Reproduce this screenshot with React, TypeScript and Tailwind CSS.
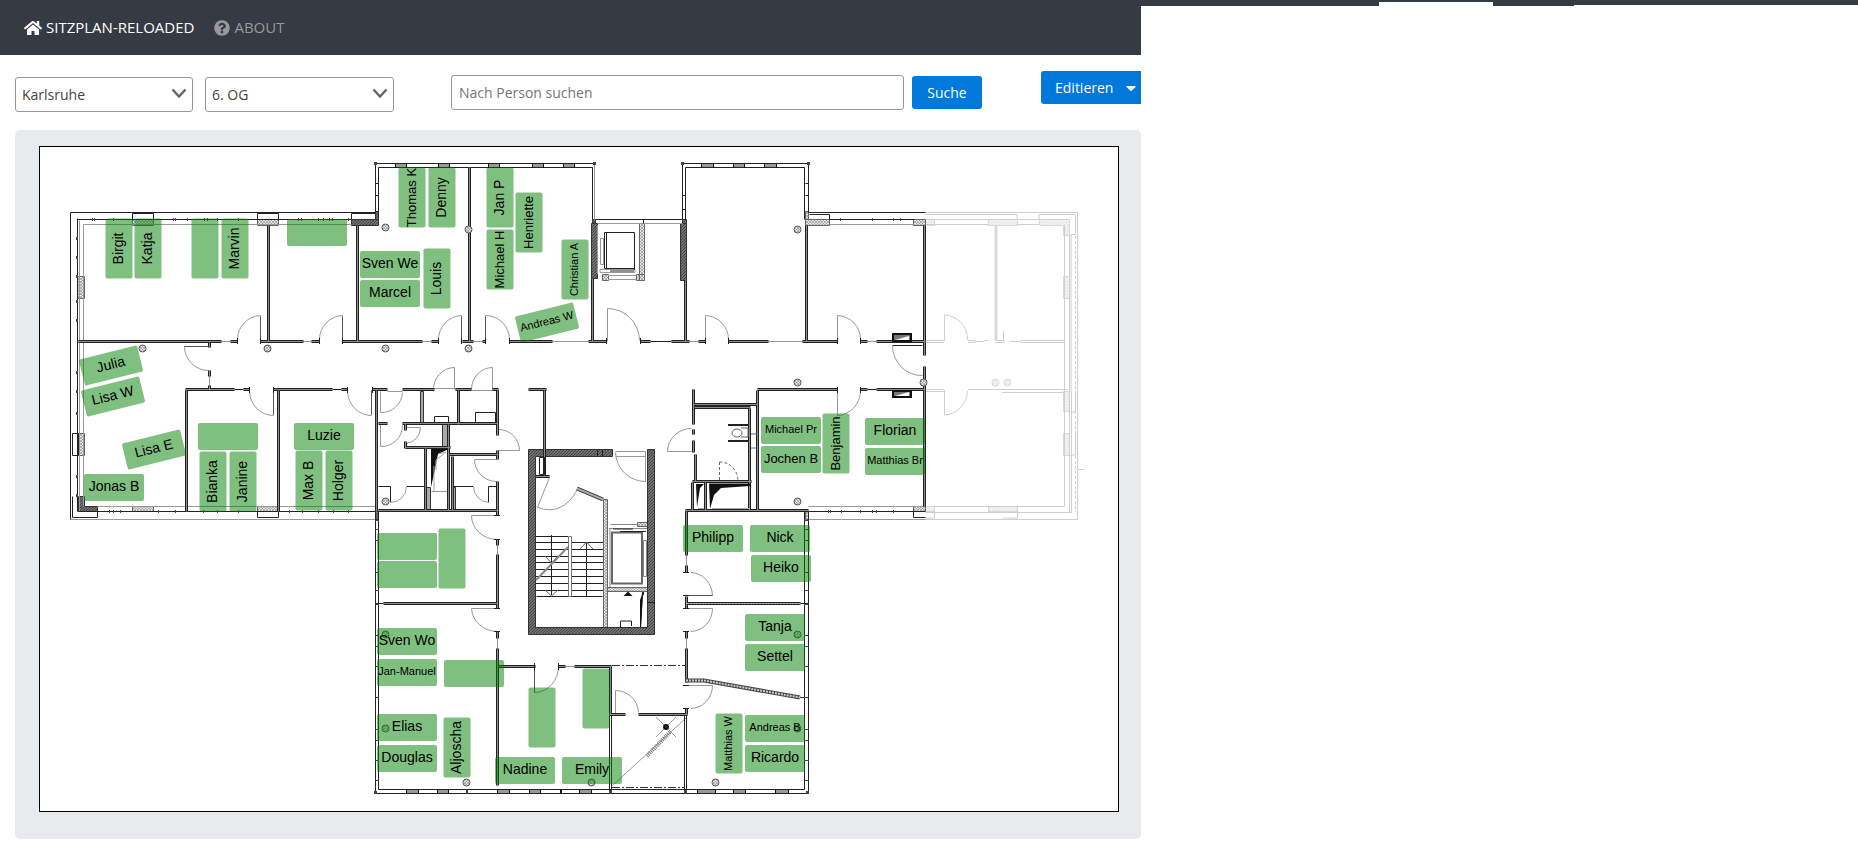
import React from "react";
import { FaHome, FaQuestionCircle, FaCaretDown } from "react-icons/fa";

type Fit = "regular" | "snug" | "tight";
type Seat = { x: number; y: number; name?: string; angle?: number; fit?: Fit };

const PLAN_X = 40;
const PLAN_Y = 147;
const SEAT_W = 60;
const SEAT_H = 27;

/* Longer names are set smaller so that they stay inside the desk. */
const fitClass: Record<Fit, string> = {
  regular: "text-[14px]",
  snug: "text-[13px]",
  tight: "text-[11px]",
};

const seats: Seat[] = [
  { name: "Birgit", x: 119, y: 249, angle: -90 },
  { name: "Katja", x: 148, y: 249, angle: -90 },
  { x: 205, y: 249, angle: -90 },
  { name: "Marvin", x: 235, y: 249, angle: -90 },
  { x: 317, y: 233 },
  { name: "Thomas K", x: 412, y: 198, angle: -90, fit: "snug" },
  { name: "Denny", x: 442, y: 198, angle: -90 },
  { name: "Jan P", x: 500, y: 198, angle: -90 },
  { name: "Henriette", x: 529, y: 223, angle: -90, fit: "snug" },
  { name: "Michael H", x: 500, y: 260, angle: -90, fit: "snug" },
  { name: "Christian A", x: 575, y: 270, angle: -90, fit: "tight" },
  { name: "Sven We", x: 390, y: 265 },
  { name: "Marcel", x: 390, y: 294 },
  { name: "Louis", x: 437, y: 279, angle: -90 },
  { name: "Andreas W", x: 547, y: 323, angle: -14, fit: "tight" },
  { name: "Julia", x: 111, y: 366, angle: -14 },
  { name: "Lisa W", x: 113, y: 397, angle: -14 },
  { name: "Lisa E", x: 154, y: 450, angle: -14 },
  { name: "Jonas B", x: 114, y: 488 },
  { x: 228, y: 437 },
  { name: "Bianka", x: 213, y: 482, angle: -90 },
  { name: "Janine", x: 243, y: 482, angle: -90 },
  { name: "Luzie", x: 324, y: 437 },
  { name: "Max B", x: 309, y: 481, angle: -90 },
  { name: "Holger", x: 339, y: 481, angle: -90 },
  { name: "Michael Pr", x: 791, y: 431, fit: "tight" },
  { name: "Jochen B", x: 791, y: 460, fit: "snug" },
  { name: "Benjamin", x: 836, y: 444, angle: -90, fit: "snug" },
  { name: "Florian", x: 895, y: 432 },
  { name: "Matthias Br", x: 895, y: 462, fit: "tight" },
  { x: 407, y: 547 },
  { x: 407, y: 575 },
  { x: 452, y: 559, angle: -90 },
  { name: "Sven Wo", x: 407, y: 642 },
  { name: "Jan-Manuel", x: 407, y: 673, fit: "tight" },
  { x: 474, y: 674 },
  { name: "Elias", x: 407, y: 728 },
  { name: "Douglas", x: 407, y: 759 },
  { name: "Aljoscha", x: 457, y: 748, angle: -90 },
  { x: 542, y: 718, angle: -90 },
  { x: 596, y: 699, angle: -90 },
  { name: "Nadine", x: 525, y: 771 },
  { name: "Emily", x: 592, y: 771 },
  { name: "Philipp", x: 713, y: 539 },
  { name: "Nick", x: 780, y: 539 },
  { name: "Heiko", x: 781, y: 569 },
  { name: "Tanja", x: 775, y: 628 },
  { name: "Settel", x: 775, y: 658 },
  { name: "Matthias W", x: 729, y: 744, angle: -90, fit: "tight" },
  { name: "Andreas B", x: 775, y: 729, fit: "tight" },
  { name: "Ricardo", x: 775, y: 759 },
];

/* Solid interior walls, drawn as a dark band with a lighter core. */
const walls = [
  // corridor, north side
  "M78 341H221 M230 341H237 M260 341H303 M311 341H319 M342 341H422 M431 341H438 M462 341H473 M482 341H485 M509 341H552 M588 341H606 M640 341H650 M671 341H689 M698 341H705 M728 341H768 M802 341H837 M860 341H867 M876 341H925",
  // corridor, south side
  "M185 389H234 M243 389H249 M273 389H332 M341 389H347 M372 389H387 M402 389H434 M455 389H471 M492 389H498 M528 389H546 M757 389H837 M860 389H867 M876 389H925",
  // room dividers, north
  "M268 225V341 M357 225V341 M469 167V341 M592 278V341 M685 280V341 M806 225V341 M924 225V355 M924 366V506",
  // room dividers, south-west
  "M186 390V511 M278 390V511 M376 390V511 M209 342V347 M209 370V376 M209 385V390",
  // wash rooms, west
  "M497 390V435 M497 450V459 M497 481V515 M378 423H387 M402 423H497 M458 390V424 M405 447H450 M448 424V510 M405 424V430 M405 441V448 M449 454H497 M452 456V510 M425 448V510 M378 510H498",
  // wash rooms, east
  "M693 389V424 M693 429V434 M693 440V452 M695 454V481 M693 404H757 M694 407H750 M749 408V510 M757 390V510 M692 481H751 M705 482V510 M692 482V510 M685 510H808",
  // stairwell annex
  "M544 390V475 M535 476H549",
  // south wing, west
  "M383 603H497 M497 539V545 M497 554V608 M497 631V638 M497 648V785 M498 666H535 M558 666H565 M574 666H611 M610 666V714",
  // south wing, east
  "M686 511V555 M686 565V572 M686 596V608 M686 631V638 M686 648V682 M686 708V714 M609 714H625 M638 714H687 M687 603H800",
].join(" ");

/* Fine dark outlines. */
const outlines = [
  "M70 519V212H375 M77 218V511 M375 212V163H595 M378 216V167H592 M592 167V219",
  "M77 219H351 M78 511H375",
  "M132 219V213H153V219 M257 219V213H278V219 M351 219V213H375",
  "M72 433H78V455H72Z M97 517H72V496 M97 511V517 M257 511V517H278V511",
  "M375 183H378 M375 195H378 M375 211H378",
  "M682 219V163H808V212H925 M685 219V167H804V219 M805 183H808 M805 195H808 M682 195H685 M682 209H685",
  "M809 214H829V219 M829 219H914 M808 511H925 M913 511V517H925",
  "M595 219H682 M643 219V223 M604 232H634V268H604Z M650 341H671",
  "M375 511V793H808V511 M378 511V789H804V511",
  "M375 603H383 M800 603H808 M609 714V789 M611 714V789 M684 714V789 M686 714V789",
  "M234 389H243 M332 389H341 M867 389H876 M922 345H892",
  "M536 596H602 M434 416H448V422H434Z M475 412H495V422H475Z",
  "M378 486H390 M406 486H424 M453 486H473 M488 486H497 M390 486V502 M488 486V502",
].join(" ");

/* Light secondary lines such as window sills. */
const sills = [
  "M79 220V511 M83 506V224H351 M97 506H375 M70 519H375",
  "M221 341H230 M303 341H311 M422 341H431 M473 341H482 M552 341H588 M689 341H698 M768 341H802 M867 341H876",
  "M829 224H913 M808 506H925 M808 519H925 M594 163V219 M597 223H682",
  "M387 391H402 M434 388H455 M471 390H492 M209 376V385 M497 545V554 M497 638V648 M686 555V565 M686 638V648 M565 666H574",
  "M612 785L686 717 M431 491H448 M615 456H645 M615 451H645",
].join(" ");

/* Door leaves together with their swing arcs. */
const doors = [
  "M260 340V315A24 24 0 0 0 237 339 M342 340V315A24 24 0 0 0 319 339",
  "M461 340V315A24 24 0 0 0 438 339 M485 340V315A24 24 0 0 1 509 339",
  "M607 341V308A32 32 0 0 1 639 340 M705 340V315A24 24 0 0 1 728 339 M837 340V315A24 24 0 0 1 860 339",
  "M273 390V415A24 25 0 0 1 249 391 M371 390V415A24 25 0 0 1 347 391 M837 390V415A24 25 0 0 0 860 391",
  "M208 346H184A24 24 0 0 0 208 370 M892 345A29 30 0 0 0 922 375",
  "M454 389V367A21 22 0 0 0 433 389 M492 389V367A21 22 0 0 0 471 389",
  "M380 391V412A21 21 0 0 0 402 392 M380 424V446A21 21 0 0 0 402 425 M405 427H420A16 16 0 0 1 405 443",
  "M498 450H519A21 21 0 0 0 498 429 M496 459H474A22 22 0 0 0 496 481 M390 502A16 16 0 0 0 406 486 M488 502A16 16 0 0 1 473 486",
  "M499 515H471A26 24 0 0 0 497 539 M499 608H471A26 24 0 0 0 497 631",
  "M693 451H667A24 23 0 0 1 691 428 M645 451V481A30 30 0 0 1 615 452 M549 477L537 507Q562 516 577 489",
  "M687 595H712A22 24 0 0 0 690 572 M687 608H712A22 23 0 0 1 690 631 M687 685H712A22 23 0 0 1 690 708",
  "M534 664V692A24 26 0 0 0 558 666 M615 713V690A23 23 0 0 1 638 712",
].join(" ");

const columns: [number, number][] = [
  [142, 348], [267, 348], [385, 227], [468, 229], [385, 348], [468, 348], [385, 501],
  [797, 229], [797, 382], [923, 382], [797, 501], [385, 634], [385, 728], [466, 782],
  [591, 782], [797, 634], [797, 728], [715, 782],
];

/* Short window posts: [x, y, width, height]. */
const posts: [number, number, number, number][] = [
  [395, 164, 12, 4], [438, 164, 12, 4], [488, 164, 12, 4], [532, 164, 12, 4], [563, 164, 12, 4],
  [701, 164, 13, 4], [733, 164, 12, 4], [764, 164, 13, 4],
  [406, 790, 13, 4], [437, 790, 12, 4], [497, 790, 13, 4], [529, 790, 12, 4], [560, 790, 2, 4], [579, 790, 13, 4],
  [697, 790, 19, 4], [733, 790, 13, 4], [775, 790, 14, 4],
];

const topTicks = [92, 94, 113, 173, 175, 187, 204, 207, 217, 238, 298, 301, 318, 323, 329, 332, 348, 840, 872, 893, 900];
const bottomTicks = [109, 113, 120, 158, 175, 203, 217, 238, 289, 302, 318, 333, 348, 828, 830, 841, 860, 872, 876, 893];
const leftTicks = [237, 256, 275, 300, 319, 371, 390, 412, 475, 494];
const wingTicks = [520, 529, 540, 572, 590, 604, 635, 646, 666, 697, 729, 740, 760, 780];
const stairs = [536, 542, 549, 556, 562, 569, 576, 583, 590];

function FloorPlan() {
  return (
    <svg viewBox="40 147 1078 664" width="1078" height="664" className="block" role="img" aria-label="Grundriss 6. OG">
      <defs>
        <pattern id="light" width="3" height="3" patternUnits="userSpaceOnUse">
          <rect width="3" height="3" fill="#e6e6e6" />
          <path d="M0 3L3 0M0 0L3 3" stroke="#888" strokeWidth=".6" />
        </pattern>
        <pattern id="dark" width="3" height="3" patternUnits="userSpaceOnUse">
          <rect width="3" height="3" fill="#707070" />
          <path d="M0 3L3 0" stroke="#444" strokeWidth="1" />
        </pattern>
      </defs>

      {/* hatched masonry */}
      <g fill="url(#light)" stroke="#666" strokeWidth="1">
        <path d="M132.500 219.500h21v6h-21zM257.500 219.500h21v6h-21zM77.500 276.500h7v22h-7zM78.500 433.500h6v22h-6zM132.500 506.500h21v5h-21zM257.500 506.500h21v5h-21z" />
        <path d="M805.500 219.500h24v6h-24zM805.500 211.500h3v8h-3zM913.500 219.500h12v6h-12zM913.500 506.500h12v5h-12zM805.500 511.500h3v8h-3z" />
        <path d="M639.500 223.500h5v57h-5zM602.500 274.500h6v6h-6zM636.500 274.500h8v6h-8zM603.500 499.500h4v128h-4zM607.500 587.500h40v4h-40zM637.500 522.500h10v4h-10z" />
      </g>
      <g fill="url(#dark)" stroke="#333" strokeWidth="1">
        <path d="M351.500 219.500h27v6h-27zM375.500 211.500h3v8h-3zM78.500 496.500h6v10h13v5h-19zM375.500 511.500h3v8h-3z" />
        <path d="M591.500 223.500h6v55h-6zM680.500 223.500h6v57h-6zM592.500 219.500h3v4h-3zM682.500 219.500h4v4h-4z" />
        <path d="M528.500 449.500H612.500V456.500H535.500V627.500H647.500V449.500H654.500V634.500H528.500Z" />
      </g>
      <g fill="#aaa" stroke="#333">
        <path d="M420.500 391.500h3v32h-3zM442.500 424.500h6v23h-6zM425.500 487.500h5v23h-5zM451.500 487.500h4v23h-4z" />
      </g>

      <g fill="none" transform="translate(.5 .5)" strokeWidth="1">
        <path d={sills} stroke="#999" />
        <path d={outlines} stroke="#222" />
        <path d={doors} stroke="#999" />
        <path d="M260 316V340M342 316V340M461 316V340M485 316V340M273 390V414M371 390V414M184 346H208M534 664V692M687 595H712" stroke="#555" />
      </g>

      <path d={walls} transform="translate(.5 .5)" fill="none" stroke="#222" strokeWidth="3" />
      <path d={walls} transform="translate(.5 .5)" fill="none" stroke="#8c8c8c" strokeWidth="1" />

      {/* jambs next to the door openings */}
      <path
        d="M237.500 338v6M260.500 338v6M319.500 338v6M342.500 338v6M438.500 338v6M461.500 338v6M485.500 338v6M509.500 338v6M606.500 338v6M640.500 338v6M705.500 338v6M728.500 338v6M837.500 338v6M860.500 338v6M249.500 387v6M273.500 387v6M347.500 387v6M372.500 387v6M837.500 387v6M860.500 387v6M534.500 663v7M558.500 663v7M494 515.500h6M494 539.500h6M494 608.500h6M494 631.500h6M683 572.500h6M683 595.500h6M683 608.500h6M683 631.500h6M683 685.500h6M683 708.500h6"
        stroke="#222"
      />

      {/* sloped wall between the south-east rooms */}
      <path d="M685 680.500H704L800 697.500" fill="none" stroke="#444" strokeWidth="4" />
      <path d="M686 680.500H704L800 697.500" fill="none" stroke="#ccc" strokeWidth="2" strokeDasharray="2 1" />
      <path d="M687 603.500H800" stroke="#bbb" strokeWidth="1" strokeDasharray="2 1" />
      <path d="M800 697.500H808" stroke="#333" />

      {/* window posts and ticks */}
      {posts.map(([x, y, w, h]) => (
        <g key={`${x}-${y}`}>
          <rect x={x} y={y} width={w} height={h - 1} fill="#999" />
          <path d={`M${x + 0.5} ${y}v${h}M${x + w - 0.5} ${y}v${h}`} stroke="#111" />
        </g>
      ))}
      <g fill="#444">
        {topTicks.map((x) => <rect key={x} x={x} y="218" width="1" height="3" />)}
        {bottomTicks.map((x) => <rect key={x} x={x} y="510" width="1" height="3" />)}
        {leftTicks.map((y) => <rect key={y} x="76" y={y} width="2" height="3" />)}
        {wingTicks.map((y) => <rect key={y} x="375" y={y} width="4" height="1" />)}
        {wingTicks.map((y) => <rect key={y} x="804" y={y} width="5" height="1" />)}
        <path d="M374 162h3v3h-3zM593 162h3v3h-3zM681 162h3v3h-3zM807 162h3v3h-3zM374 791h3v3h-3zM806 791h3v3h-3zM609 790h3v4h-3zM684 790h3v4h-3zM466 790h2v4h-2z" />
      </g>

      {/* lift shaft in the north core */}
      <path d="M600.500 238.500h3v26h-3zM600 269.500h35v3h-35zM608 275.500h28M608 279.500h28M597.500 225V274" fill="none" stroke="#999" />
      <path d="M605 268.500h25M610 271h24M606.500 233V268M634.500 233V270" stroke="#222" />

      {/* stairwell */}
      <g stroke="#222" fill="none">
        {stairs.map((y, i) => (
          <path key={y} d={`M536 ${y + 0.5}H568${i > 0 ? `M571 ${y + 0.5}H603` : ""}`} />
        ))}
        <path d="M551.500 535V562M551.500 562V595M586.500 543V597" />
        <path d="M545 556l6.500 7 6.500-7M545 590l6.500 6 6.500-6M580 549l6.500-7 6.500 7" stroke="#666" />
        <path d="M568.500 536.500h3v60h-3z" fill="#fff" stroke="#777" />
        <path d="M536 580L568 547" stroke="#888" strokeWidth="2" />
        <path d="M577 488.500L603 499.500" strokeWidth="4" stroke="#333" />
        <path d="M577 488.500L603 499.500" strokeWidth="2" stroke="#aaa" />
        <path d="M539.500 457.500h5v17h-5zM597.500 450v6M602.500 450v6" />
        <path d="M612 532.500h30v51h-30z" stroke="#666" strokeWidth="2" />
        <path d="M610.500 524.500h27M609 528.500h38M610 587V529M643.500 540.500h3v36h-3z" stroke="#888" />
        <path d="M613 529h20M620 531.500h26M640.500 627l2-35M643.500 592v3M620.500 627v-6h11v5M647 602.500h8" />
      </g>
      <path d="M628 591.500l-4.500 4.500h9zM640 600l3-8-2 35h-1z" fill="#111" />

      {/* installation shafts */}
      <path d="M431 449H449L438 454L434 474L431 487Z M709 483.500H750V486L721 488L714 495L710 509Z M696 484H704L700 488L697 507Z" fill="#111" />
      <path d="M438 454l8-2M436 470V460l10-8M434 491V466M712 508.500h38M698 508.500h6" fill="none" stroke="#aaa" />
      <g fill="#777" stroke="#111" strokeWidth="2">
        <path d="M893 334h18v7h-18zM893 391h18v6h-18z" />
      </g>
      <path d="M895 340l14-4v4zM895 396l14-4v4z" fill="#fff" />

      {/* accessible toilet */}
      <g fill="none" stroke="#666">
        <path d="M728 425h20M728 441h20" stroke="#222" strokeWidth="2" />
        <ellipse cx="737" cy="433" rx="5" ry="4" />
        <path d="M741 428h7v9h-7M751 434h6M751 448h6" />
        <path d="M719.500 462V481M719.500 462A18 19 0 0 1 738 481" strokeDasharray="3 2" />
      </g>

      {/* void with roof light */}
      <path d="M612 665.500H686M612 787.500H685" stroke="#333" strokeDasharray="8 2 2 2" />
      <g stroke="#999" fill="none">
        <path d="M656 717l20 20M676 717l-20 20" />
        <path d="M647 756L670 732" stroke="#777" strokeWidth="4" strokeDasharray="1 1" />
        <circle cx="666" cy="727" r="2" fill="#333" stroke="#111" strokeWidth="2" />
      </g>

      {/* structural columns */}
      <g fill="url(#light)" stroke="#555">
        {columns.map(([x, y]) => <circle key={`${x}-${y}`} cx={x + 0.5} cy={y + 0.5} r="3.500" />)}
      </g>

      {/* neighbouring unit, greyed out */}
      <g opacity=".28">
        <g fill="url(#light)" stroke="#777">
          <path d="M925.500 219.500h9v6h-9zM988.500 219.500h29v6h-29zM1039.500 219.500h30v16h-6v-10h-24zM1063.500 276.500h6v22h-6zM1063.500 391.500h6v20h-6zM1063.500 433.500h6v22h-6zM925.500 506.500h9v5h-9zM988.500 506.500h29v5h-29z" />
          <circle cx="995.500" cy="382.500" r="3.500" />
          <circle cx="1007.500" cy="382.500" r="3.500" />
        </g>
        <g fill="none" stroke="#555">
          <path d="M925 212.500H1077.500V519.500H925M925 214.500H1017V219M1039 219V214.500H1075.500V234.500H1071V391M925 219.500H1069M925 224.500H988M1017 224.500H1039M1064.500 225V506.500H934M925 512.500H1071.500V391M1069.500 235V512M1075.500 391V412H1070M1075.500 433V455H1070M934.500 511v7h-9M1017.500 506v12h-15M1077 469.500h7" />
          <path d="M1075.500 236V512" strokeDasharray="3 2" />
          <path d="M944.500 341V315A24 24 0 0 1 967.500 340M944.500 390V415A24 25 0 0 0 967.500 391M1003.500 341V331" />
          <path d="M925 340.500h19M925 342.500h19M968 340.500h7v2h-7M984 340.500h4M995 340.500h9v2h-9M1020 340.500h45M1020 342.500h45M925 389.500h19M925 391.500h19M968 389.500h100M1002 392.500h63M975 341.500h9M1010 341.500h10" />
        </g>
        <path d="M996 225V341" stroke="#777" strokeWidth="3" />
      </g>
    </svg>
  );
}

function SeatTag({ seat }: { seat: Seat }) {
  return (
    <div
      className={
        "absolute flex h-[27px] w-[60px] items-center justify-center rounded-[2px] bg-[rgba(0,128,0,0.5)] pb-[3px] font-['Liberation_Sans',Arial,sans-serif] leading-none whitespace-nowrap text-black " +
        fitClass[seat.fit ?? "regular"]
      }
      style={{
        left: seat.x - PLAN_X - SEAT_W / 2,
        top: Math.floor(seat.y - PLAN_Y - SEAT_H / 2),
        rotate: `${seat.angle ?? 0}deg`,
      }}
    >
      {seat.name}
    </div>
  );
}

function Picker({ label, value, className }: { label: string; value: string; className: string }) {
  return (
    <div className={"relative mt-1.5 shrink-0 " + className}>
      <select
        aria-label={label}
        defaultValue={value}
        className="h-[35px] w-full appearance-none rounded-[3px] border border-[#999] bg-white pr-8 pl-1.5 text-[14px] text-[#444]"
      >
        <option>{value}</option>
      </select>
      <svg className="pointer-events-none absolute top-[11px] right-[6px]" width="16" height="11" viewBox="0 0 16 11" fill="none" aria-hidden="true">
        <path d="M1.500 1.500L8 8.500L14.500 1.500" stroke="#666" strokeWidth="2.500" />
      </svg>
    </div>
  );
}

export default function App() {
  return (
    <div className="flex min-h-screen bg-white font-['Open_Sans',sans-serif]">
      <div className="min-w-0 flex-1 overflow-hidden">
        <nav className="flex h-[55px] items-center gap-5 bg-[#363a42] pl-6 text-[15px]">
          <a href="#home" className="flex items-center gap-1 text-white">
            <FaHome className="size-[18px]" />
            SITZPLAN-RELOADED
          </a>
          <a href="#about" className="flex items-center gap-1 text-[#97999c]">
            <FaQuestionCircle className="size-4" />
            ABOUT
          </a>
        </nav>

        <form className="flex h-[75px] items-start pt-4 pl-[15px]" onSubmit={(e) => e.preventDefault()}>
          <Picker label="Standort" value="Karlsruhe" className="w-[178px]" />
          <Picker label="Etage" value="6. OG" className="ml-3 w-[189px]" />
          <input
            type="search"
            aria-label="Nach Person suchen"
            placeholder="Nach Person suchen"
            className="mt-1 ml-[57px] h-[35px] min-w-0 flex-1 rounded-[3px] border border-[#999] bg-white px-[7px] text-[14px] placeholder:text-[#757575]"
          />
          <button type="submit" className="mt-[5px] ml-2 h-[33px] w-[70px] shrink-0 rounded-[3px] bg-[#0079db] text-[14px] text-white">
            Suche
          </button>
          <button type="button" className="ml-[59px] flex h-[33px] w-[100px] shrink-0 items-center justify-between rounded-l-[3px] bg-[#0079db] pr-[2px] pl-[14px] text-[14px] text-white">
            Editieren
            <FaCaretDown className="size-4" />
          </button>
        </form>

        <main className="ml-[15px] rounded-[5px] bg-[#e7ebee] pt-4 pb-[27px] pl-6">
          <div className="relative w-[1080px] border border-black bg-white">
            <FloorPlan />
            {seats.map((seat) => (
              <SeatTag key={`${seat.x}-${seat.y}`} seat={seat} />
            ))}
          </div>
        </main>
      </div>

      <div className="flex w-[717px] shrink-0 items-start" aria-hidden="true">
        <div className="h-1.5 w-[238px] bg-[#363a42]" />
        <div className="h-0.5 w-[114px] bg-[#363a42]" />
        <div className="h-1.5 w-[81px] bg-[#363a42]" />
        <div className="h-[5px] flex-1 bg-[#363a42]" />
      </div>
    </div>
  );
}
